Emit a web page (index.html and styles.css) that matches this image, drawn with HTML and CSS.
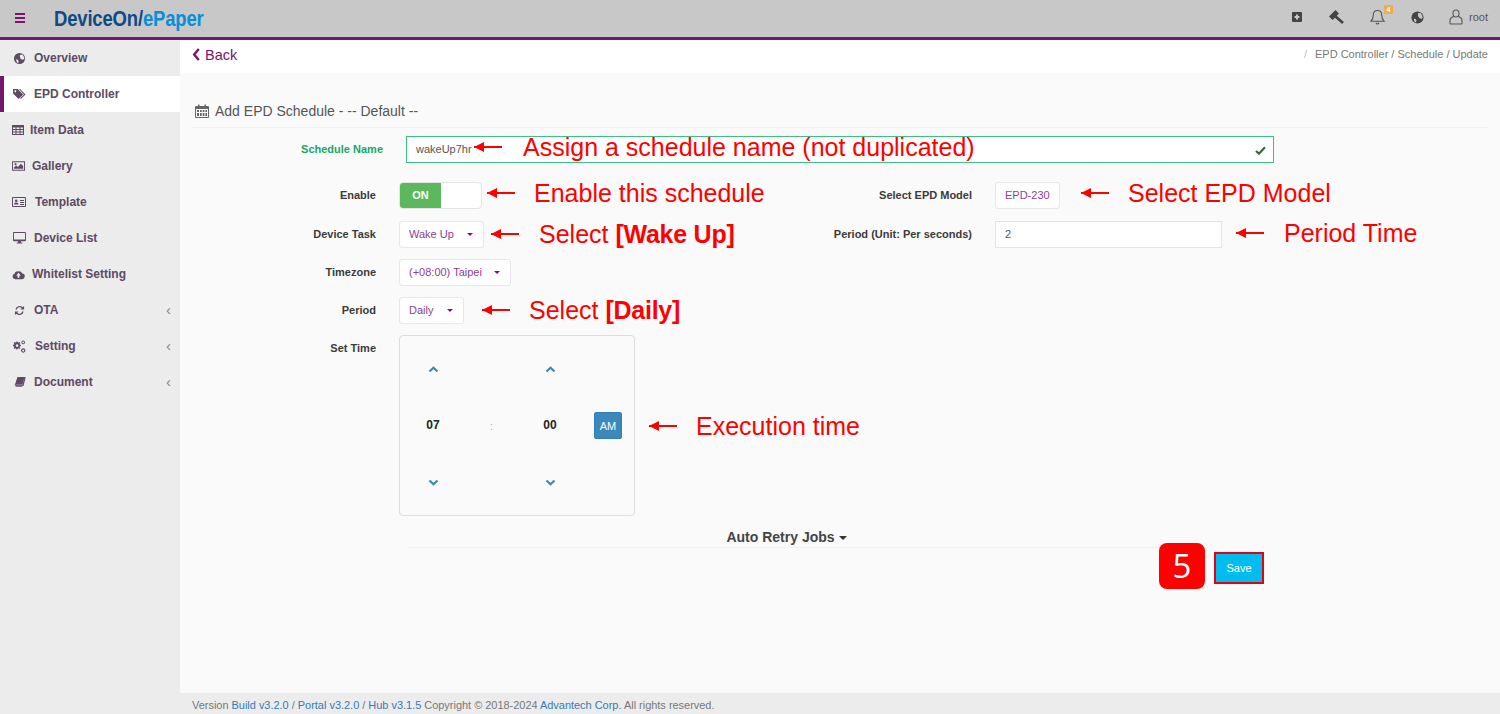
FILE: index.html
```html
<!DOCTYPE html>
<html lang="en">

<head>
    <meta charset="UTF-8">
    <meta name="viewport" content="width=device-width, initial-scale=1.0">
    <title>DeviceOn/ePaper</title>
    <link rel="stylesheet" href="styles.css">
</head>

<body>
    <header class="topbar">
        <div class="burger"><span></span><span></span><span></span></div>
        <div class="logo"><span class="logo-dark">DeviceOn/</span><span class="logo-light">ePaper</span></div>
        <div class="top-icons">
            <svg class="ti ti-plus" viewBox="0 0 12 12"><path fill-rule="evenodd" d="M2 1h8a1 1 0 0 1 1 1v8a1 1 0 0 1-1 1H2a1 1 0 0 1-1-1V2a1 1 0 0 1 1-1zm3 2.500V5H3.500v2H5v1.500h2V7h1.500V5H7V3.500z"/></svg>
            <svg class="ti ti-gavel" viewBox="0 0 16 16"><rect x="1.500" y="3.500" width="9" height="5" transform="rotate(-45 6 6)"/><path d="M7 7l8 7" fill="none" stroke="#444" stroke-width="2.800"/></svg>
            <span class="bell">
                <svg class="ti-bell" viewBox="0 0 16 18"><path fill="none" stroke="#555" stroke-width="1.200" d="M8 2c-3 0-4.500 2-4.500 5 0 3.500-1 5-2.500 6.500h14c-1.500-1.500-2.500-3-2.500-6.500 0-3-1.500-5-4.500-5zM6.500 15c.2 1 .8 1.500 1.500 1.500s1.300-.5 1.500-1.500"/></svg>
                <span class="badge">4</span>
            </span>
            <svg class="ti ti-globe" viewBox="0 0 14 14"><circle cx="7" cy="7" r="6.500"/><path fill="#c8c8c8" d="M7.500 2.500 10 2l2 2.500.5 3-1.500 1-2-1-1.500-2zM3 8l2 .5 1 2-1 2-1.500-1.500z"/></svg>
            <span class="user">
                <svg class="ti-user" viewBox="0 0 14 16"><path fill="none" stroke="#555" stroke-width="1.100" d="M7 1c-2 0-3 1.300-3 3.200S5 8 7 8s3-1.900 3-3.800S9 1 7 1zM4.500 7.500C2.500 8.200 1 9.500 1 11.500V14c0 .6.400 1 1 1h10c.6 0 1-.4 1-1v-2.500c0-2-1.500-3.300-3.500-4"/></svg>
                root
            </span>
        </div>
    </header>

    <div class="shell">
        <nav class="sidebar">
            <a class="nav-item"><svg class="ni ni-globe" viewBox="0 0 14 14"><circle cx="7" cy="7" r="7"/><path fill="#ececec" d="M7.500 2.500 10.500 2l2 2.500.5 3-2 1-2.500-1-1-2.500zM2.500 8l2.500.5 1 2.500-1 2-1.500-1.500z"/></svg><span>Overview</span></a>
            <a class="nav-item active"><svg class="ni ni-tag" viewBox="0 0 14 13"><path d="M0 1h5l6 6-5 5-6-6zM2.500 2.500a1 1 0 1 0 .01 0z" fill-rule="evenodd"/><path d="M6.500 1h1.200l5.800 6-5 5-.8-.8L11.800 7z"/></svg><span>EPD Controller</span></a>
            <a class="nav-item"><svg class="ni ni-table" viewBox="0 0 12 12"><path fill-rule="evenodd" d="M0 1h12v10H0zm1 2.500V5h2.500V3.500zm3.500 0V5h3V3.500zm4 0V5H11V3.500zM1 6v1.500h2.500V6zm3.500 0v1.500h3V6zm4 0v1.500H11V6zM1 8.500V10h2.500V8.500zm3.500 0V10h3V8.500zm4 0V10H11V8.500z"/></svg><span>Item Data</span></a>
            <a class="nav-item"><svg class="ni ni-image" viewBox="0 0 14 12"><path fill-rule="evenodd" d="M0 1h14v10H0zm1 1v8h12V2z"/><path d="M2 9V7.500l2.500-2 2 1.500 3-3.500L12 6v3z"/><circle cx="3.800" cy="4" r="1.100"/></svg><span>Gallery</span></a>
            <a class="nav-item"><svg class="ni ni-card" viewBox="0 0 14 12"><path fill-rule="evenodd" d="M1 1h12a1 1 0 0 1 1 1v8a1 1 0 0 1-1 1H1a1 1 0 0 1-1-1V2a1 1 0 0 1 1-1zm0 1v8h12V2z"/><circle cx="4.200" cy="4.700" r="1.300"/><path d="M2 8.500c0-1.500 1-2 2.200-2s2.200.5 2.200 2zM8 4h4v1H8zM8 6h4v1H8zM8 8h4v1H8z"/></svg><span>Template</span></a>
            <a class="nav-item"><svg class="ni ni-desktop" viewBox="0 0 14 13"><path fill-rule="evenodd" d="M1 0h12a1 1 0 0 1 1 1v8a1 1 0 0 1-1 1H8.500v1.500H10v1H4v-1h1.500V10H1a1 1 0 0 1-1-1V1a1 1 0 0 1 1-1zm0 1v7h12V1z"/></svg><span>Device List</span></a>
            <a class="nav-item"><svg class="ni ni-cloud" viewBox="0 0 14 11"><path fill-rule="evenodd" d="M3.500 10.500a3 3 0 0 1-.7-5.900 3 3 0 0 1 4-2.400A3.800 3.800 0 0 1 11 4.500a3 3 0 0 1-.5 6zM7 3.500 4.500 6.500H6v2.500h2V6.500h1.500z"/></svg><span>Whitelist Setting</span></a>
            <a class="nav-item"><svg class="ni ni-sync" viewBox="0 0 12 12"><path d="M1.500 5a4.700 4.700 0 0 1 8-2.500L11 1v4H7l1.500-1.500A3 3 0 0 0 3.200 5zM10.500 7a4.700 4.700 0 0 1-8 2.500L1 11V7h4L3.500 8.500A3 3 0 0 0 8.800 7z"/></svg><span>OTA</span><span class="chev">&#8249;</span></a>
            <a class="nav-item"><svg class="ni ni-cogs" viewBox="0 0 14 14"><path fill-rule="evenodd" d="M5 2.500l1 .3.800-.6 1 1-.6.8.3 1 1 .2v1.400l-1 .2-.3 1 .6.800-1 1-.8-.6-1 .3-.2 1H3.700l-.2-1-1-.3-.8.6-1-1 .6-.8-.3-1-1-.2V5.200l1-.2.3-1-.6-.8 1-1 .8.6 1-.3.2-1h1.400zM4.400 4.500a1.500 1.500 0 1 0 .01 0z"/><path fill-rule="evenodd" d="M11 .5a2 2 0 1 1-.01 0zm0 1a1 1 0 1 0 .01 0zM11 9a2.300 2.300 0 1 1-.01 0zm0 1.200a1.100 1.100 0 1 0 .01 0z"/></svg><span>Setting</span><span class="chev">&#8249;</span></a>
            <a class="nav-item"><svg class="ni ni-book" viewBox="0 0 12 12"><path d="M3.500 1H11c.5 0 .7.400.6.800L9.500 10H2.500c-.7 0-1-.3-.8-.8l.1-.2H8.500l1.800-7H4.200L2 9 .7 9.500z"/><path d="M3.500 1.500h7L8.500 8.800H1.500z"/><path fill="#8a7a90" d="M1.500 9.500h7l-.4 1.500H1.500z"/></svg><span>Document</span><span class="chev">&#8249;</span></a>
        </nav>

        <main class="main">
            <div class="crumbs">
                <a class="back"><svg class="back-icon" viewBox="0 0 9 14"><path d="M7 1 2 7l5 6" fill="none" stroke="#78156e" stroke-width="2.600"/></svg>Back</a>
                <div class="path"><span class="path-sep">/</span>EPD Controller / Schedule / Update</div>
            </div>

            <div class="content">
                <h2 class="panel-title">
                    <svg class="cal" viewBox="0 0 14 14"><path fill-rule="evenodd" d="M1 2h2V.5h1.500V2h5V.5H11V2h2a1 1 0 0 1 1 1v10a1 1 0 0 1-1 1H1a1 1 0 0 1-1-1V3a1 1 0 0 1 1-1zm0 3v8h12V5zm1 1h2v2H2zm3 0h1.700v2H5zm2.700 0h1.700v2H7.700zM10.400 6H12v2h-1.600zM2 9h2v3H2zm3 0h1.700v3H5zm2.700 0h1.700v3H7.700zm2.700 0H12v3h-1.600z"/></svg>
                    Add EPD Schedule - -- Default --
                </h2>

                <div class="name-row">
                    <label class="label name-label">Schedule Name</label>
                    <div class="name-input">wakeUp7hr<svg class="check" viewBox="0 0 12 10"><path d="M1 5.500 4.300 8.500 11 1.500" fill="none" stroke="#2f6b3c" stroke-width="2.400"/></svg></div>
                </div>

                <div class="cols">
                    <div class="col-left">
                        <div class="row row-enable">
                            <label class="label">Enable</label>
                            <div class="toggle"><span class="toggle-on">ON</span></div>
                        </div>
                        <div class="row">
                            <label class="label">Device Task</label>
                            <div class="select select-task">Wake Up<i class="caret"></i></div>
                        </div>
                        <div class="row">
                            <label class="label">Timezone</label>
                            <div class="select select-zone">(+08:00) Taipei<i class="caret"></i></div>
                        </div>
                        <div class="row">
                            <label class="label">Period</label>
                            <div class="select select-period">Daily<i class="caret"></i></div>
                        </div>
                        <div class="row row-time">
                            <label class="label">Set Time</label>
                            <div class="timebox">
                                <div class="time-col">
                                    <svg class="tchev" viewBox="0 0 10 7"><path d="M1 5.500 5 1.800l4 3.700" fill="none" stroke="#3c88ba" stroke-width="2.200"/></svg>
                                    <b class="time-val">07</b>
                                    <svg class="tchev" viewBox="0 0 10 7"><path d="M1 1.500 5 5.200l4-3.700" fill="none" stroke="#3c88ba" stroke-width="2.200"/></svg>
                                </div>
                                <span class="time-sep">:</span>
                                <div class="time-col">
                                    <svg class="tchev" viewBox="0 0 10 7"><path d="M1 5.500 5 1.800l4 3.700" fill="none" stroke="#3c88ba" stroke-width="2.200"/></svg>
                                    <b class="time-val">00</b>
                                    <svg class="tchev" viewBox="0 0 10 7"><path d="M1 1.500 5 5.200l4-3.700" fill="none" stroke="#3c88ba" stroke-width="2.200"/></svg>
                                </div>
                                <button class="ampm">AM</button>
                            </div>
                        </div>
                    </div>
                    <div class="col-right">
                        <div class="row row-enable">
                            <label class="label label-right">Select EPD Model</label>
                            <div class="select select-model">EPD-230</div>
                        </div>
                        <div class="row">
                            <label class="label label-right">Period (Unit: Per seconds)</label>
                            <div class="period-input">2</div>
                        </div>
                    </div>
                </div>

                <div class="retry">Auto Retry Jobs<i class="caret caret-dark"></i></div>

                <div class="actions">
                    <div class="step">5</div>
                    <div class="save-frame"><button class="save">Save</button></div>
                </div>
            </div>

            <footer class="footer">
                Version <a>Build v3.2.0</a> / <a>Portal v3.2.0</a> / <a>Hub v3.1.5</a> Copyright &copy; 2018-2024 <a>Advantech Corp.</a> All rights reserved.
            </footer>
        </main>
    </div>

    <!-- red notes drawn on top of the screenshot -->
    <div class="note n-name"><i class="arrow"></i><span class="note-text">Assign a schedule name (not duplicated)</span></div>
    <div class="note n-enable"><i class="arrow"></i><span class="note-text">Enable this schedule</span></div>
    <div class="note n-task"><i class="arrow"></i><span class="note-text">Select <b>[Wake Up]</b></span></div>
    <div class="note n-daily"><i class="arrow"></i><span class="note-text">Select <b>[Daily]</b></span></div>
    <div class="note n-exec"><i class="arrow"></i><span class="note-text">Execution time</span></div>
    <div class="note n-model"><i class="arrow"></i><span class="note-text">Select EPD Model</span></div>
    <div class="note n-period"><i class="arrow"></i><span class="note-text">Period Time</span></div>
</body>

</html>
```

FILE: styles.css
```css
* {
    box-sizing: border-box;
}
html,
body {
    height: 100%;
}
body {
    margin: 0;
    position: relative;
    overflow: hidden;
    font-family: "Liberation Sans", Arial, sans-serif;
    font-size: 12px;
    color: #555;
    background: #fafafa;
}

/* top bar */
.topbar {
    height: 40px;
    background: #c8c8c8;
    border-bottom: 3px solid #78156e;
    display: flex;
    align-items: center;
    padding-left: 15px;
}
.burger {
    width: 10px;
    display: flex;
    flex-direction: column;
    gap: 2px;
    margin-bottom: 2px;
}
.burger span {
    height: 2px;
    background: #78156e;
}
.logo {
    margin-left: 29px;
    font-weight: bold;
    font-size: 22px;
    letter-spacing: -.2px;
    white-space: nowrap;
    transform: scaleX(.84);
    transform-origin: left center;
}
.logo-dark {
    color: #0f4a85;
}
.logo-light {
    color: #0a8ed8;
}
.top-icons {
    margin-left: auto;
    display: flex;
    align-items: center;
    padding: 0 12px 3px 0;
}
.ti {
    fill: #444;
    display: block;
}
.ti-plus {
    width: 12px;
    height: 12px;
}
.ti-gavel {
    width: 16px;
    height: 16px;
    margin-left: 25px;
}
.bell {
    position: relative;
    margin-left: 26px;
    display: block;
    height: 18px;
}
.ti-bell {
    width: 15px;
    height: 18px;
    display: block;
}
.badge {
    position: absolute;
    left: 14px;
    top: -3px;
    width: 9px;
    height: 9px;
    background: #f0ad4e;
    border-radius: 1px;
    color: #fff;
    font-size: 7px;
    font-weight: bold;
    line-height: 9px;
    text-align: center;
}
.ti-globe {
    width: 13px;
    height: 13px;
    margin-left: 26px;
}
.user {
    display: flex;
    align-items: center;
    gap: 6px;
    margin-left: 25px;
    font-size: 11px;
    color: #555;
}
.ti-user {
    width: 14px;
    height: 16px;
}

.shell {
    display: flex;
    height: 674px;
}

/* left menu */
.sidebar {
    width: 180px;
    flex: none;
    background: #ececec;
}
.nav-item {
    height: 36px;
    display: flex;
    align-items: center;
    color: #5d4a63;
    font-weight: bold;
    font-size: 12px;
    position: relative;
}
.nav-item.active {
    background: #fff;
    box-shadow: inset 4px 0 0 #78156e;
}
.ni {
    fill: #5d4a63;
    flex: none;
}
.ni-globe {
    width: 11px;
    height: 11px;
    margin: 0 9px 0 14px;
}
.ni-tag {
    width: 13px;
    height: 12px;
    margin: 0 8px 0 13px;
}
.ni-table {
    width: 12px;
    height: 12px;
    margin: 0 6px 0 12px;
}
.ni-image {
    width: 13px;
    height: 12px;
    margin: 0 7px 0 12px;
}
.ni-card {
    width: 14px;
    height: 12px;
    margin: 0 9px 0 12px;
}
.ni-desktop {
    width: 13px;
    height: 12px;
    margin: 0 8px 0 13px;
}
.ni-cloud {
    width: 13px;
    height: 11px;
    margin: 0 7px 0 12px;
}
.ni-sync {
    width: 11px;
    height: 11px;
    margin: 0 9px 0 14px;
}
.ni-cogs {
    width: 13px;
    height: 13px;
    margin: 0 9px 0 13px;
}
.ni-book {
    width: 12px;
    height: 12px;
    margin: 0 8px 0 14px;
}
.chev {
    position: absolute;
    right: 9px;
    top: 9px;
    font-weight: normal;
    font-size: 15px;
    color: #888;
}

/* main column */
.main {
    flex: 1;
    display: flex;
    flex-direction: column;
}
.crumbs {
    height: 33px;
    background: #fff;
    display: flex;
    justify-content: space-between;
    align-items: center;
    padding: 0 12px 4px 12px;
}
.back {
    font-size: 14.500px;
    color: #78156e;
    display: flex;
    align-items: center;
    gap: 4px;
}
.back-icon {
    width: 9px;
    height: 13px;
}
.path {
    font-size: 11px;
    color: #777;
    margin-bottom: 2px;
}
.path-sep {
    color: #bbb;
    margin-right: 8px;
}
.content {
    flex: 1;
    padding: 0 12px;
    background: #fafafa;
}
.panel-title {
    margin: 29px 0 8px;
    height: 26px;
    padding: 0 0 8px 3px;
    font-size: 14px;
    font-weight: normal;
    color: #555;
    border-bottom: 1px solid #f2f2f2;
    display: flex;
    align-items: center;
    gap: 6px;
}
.cal {
    width: 14px;
    height: 14px;
    fill: #666;
}

/* form */
.label {
    width: 184px;
    text-align: right;
    font-weight: bold;
    font-size: 11px;
    padding-bottom: 2px;
    color: #3a3a3a;
    flex: none;
}
.name-row {
    display: flex;
    align-items: center;
    gap: 23px;
    margin-bottom: 19px;
}
.name-label {
    width: 191px;
    color: #14a866;
}
.name-input {
    width: 868px;
    height: 27px;
    background: #fff;
    border: 1px solid #3fbf82;
    padding-left: 9px;
    font-size: 11px;
    line-height: 25px;
    color: #555;
    position: relative;
}
.check {
    position: absolute;
    right: 7px;
    top: 9px;
    width: 11px;
    height: 9px;
}
.cols {
    display: flex;
}
.col-left {
    width: 600px;
    flex: none;
}
.col-right {
    flex: 1;
}
.row {
    display: flex;
    align-items: center;
    gap: 23px;
    margin-bottom: 11px;
}
.label-right {
    width: 180px;
}
.row-enable {
    margin-bottom: 12px;
}
.toggle {
    width: 83px;
    height: 27px;
    border: 1px solid #e3e3e8;
    border-radius: 4px;
    background: #fff;
    overflow: hidden;
}
.toggle-on {
    display: block;
    width: 41px;
    height: 25px;
    background: #5cb85c;
    color: #fff;
    font-weight: bold;
    font-size: 11px;
    line-height: 25px;
    text-align: center;
}
.select {
    height: 27px;
    background: #fff;
    border: 1px solid #e6e6eb;
    border-radius: 3px;
    color: #8a3f96;
    font-size: 11px;
    line-height: 25px;
    padding-left: 9px;
    display: flex;
    align-items: center;
}
.select-task {
    width: 85px;
}
.select-zone {
    width: 112px;
}
.select-period {
    width: 65px;
}
.select-model {
    width: 65px;
}
.caret {
    margin-left: auto;
    margin-right: 10px;
    width: 0;
    height: 0;
    border-left: 3.500px solid transparent;
    border-right: 3.500px solid transparent;
    border-top: 3.500px solid #78156e;
}
.period-input {
    width: 227px;
    height: 27px;
    background: #fff;
    border: 1px solid #e3e3e8;
    padding-left: 9px;
    font-size: 11px;
    line-height: 25px;
    color: #555;
}
.row-time {
    align-items: flex-start;
    margin-bottom: 0;
}
.row-time .label {
    margin-top: 7px;
}
.timebox {
    width: 236px;
    height: 181px;
    border: 1px solid #dcdce2;
    border-radius: 4px;
    display: flex;
    align-items: center;
    padding-left: 12px;
}
.time-col {
    width: 42px;
    height: 100%;
    display: flex;
    flex-direction: column;
    align-items: center;
    justify-content: space-between;
    padding: 30px 0 29px;
}
.tchev {
    width: 11px;
    height: 7px;
}
.time-val {
    font-size: 12px;
    color: #222;
    padding-bottom: 2px;
}
.time-sep {
    width: 75px;
    text-align: center;
    color: #aaa;
    font-size: 11px;
}
.ampm {
    margin-left: 23px;
    width: 28px;
    height: 27px;
    padding: 0;
    border: 1px solid #357ebd;
    border-radius: 2px;
    background: #3c88ba;
    color: #fff;
    font: 11px "Liberation Sans", sans-serif;
}
.retry {
    width: 763px;
    margin: 13px 0 0 215px;
    padding-right: 4px;
    height: 19px;
    border-bottom: 1px solid #f2f2f2;
    font-size: 14px;
    font-weight: bold;
    color: #444;
    text-align: center;
    line-height: 16px;
}
.caret-dark {
    display: inline-block;
    margin: 0 0 2px 4px;
    border-left-width: 4px;
    border-right-width: 4px;
    border-top: 4px solid #333;
}
.actions {
    display: flex;
    justify-content: flex-end;
    align-items: flex-start;
    gap: 9px;
    margin-top: -5px;
    padding-right: 224px;
}
.step {
    width: 46px;
    height: 46px;
    background: #f00;
    border-radius: 8px;
    color: #fff;
    font-size: 33px;
    line-height: 46px;
    text-align: center;
    font-family: "Open Sans", sans-serif;
}
.save-frame {
    border: 2px solid #e60012;
    height: 32px;
    width: 50px;
    margin-top: 9px;
}
.save {
    display: block;
    width: 100%;
    height: 100%;
    border: 0;
    padding: 0;
    background: #00bdf0;
    color: #fff;
    font: 11px "Liberation Sans", sans-serif;
}
.footer {
    height: 21px;
    background: #ececec;
    padding-left: 12px;
    font-size: 10.950px;
    line-height: 24px;
    color: #777;
}
.footer a {
    color: #337ab7;
}

/* annotations over the page */
.note {
    position: absolute;
    display: flex;
    align-items: center;
    height: 30px;
    color: #f00;
    font-size: 25px;
}
.note-text {
    white-space: nowrap;
}
.note-text b {
    letter-spacing: -.25px;
}
.arrow {
    display: block;
    position: relative;
    width: 28px;
    height: 2px;
    background: #f00;
    flex: none;
}
.arrow::before {
    content: "";
    position: absolute;
    left: 0;
    top: -4px;
    border-top: 5px solid transparent;
    border-bottom: 5px solid transparent;
    border-right: 10px solid #f00;
}
.n-name {
    left: 474px;
    top: 132px;
    gap: 21px;
}
.n-enable {
    left: 487px;
    top: 178px;
    gap: 19px;
}
.n-task {
    left: 491px;
    top: 219px;
    gap: 20px;
}
.n-daily {
    left: 482px;
    top: 295px;
    gap: 19px;
}
.n-exec {
    left: 649px;
    top: 411px;
    gap: 19px;
}
.n-model {
    left: 1081px;
    top: 178px;
    gap: 19px;
}
.n-period {
    left: 1236px;
    top: 218px;
    gap: 20px;
}
```
